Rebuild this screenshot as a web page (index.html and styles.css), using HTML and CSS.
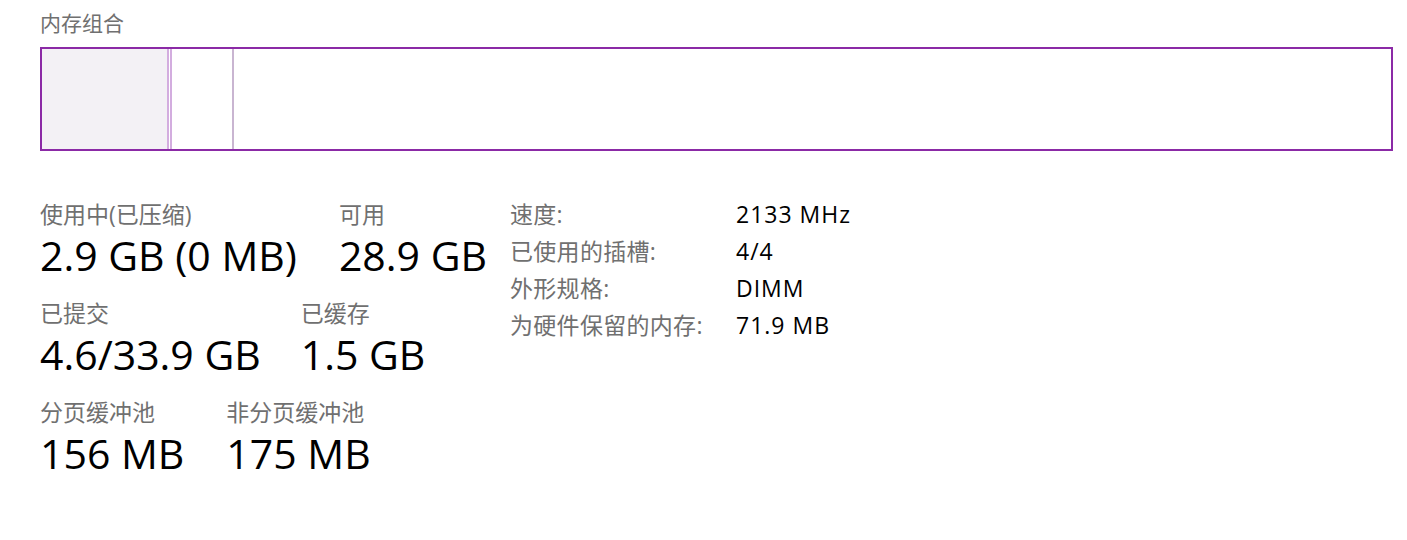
FILE: index.html
```html
<!DOCTYPE html>
<html lang="zh-CN">
<head>
    <meta charset="UTF-8">
    <title>内存</title>
    <link rel="stylesheet" href="styles.css">
</head>
<body>
<div class="memory">
    <div class="title">内存组合</div>
    <div class="composition">
        <div class="slot slot-used"></div>
        <div class="slot slot-modified"></div>
        <div class="slot slot-standby"></div>
        <div class="slot slot-free"></div>
    </div>

    <div class="details">
        <div class="stats">
            <div class="stat-row">
                <div class="stat">
                    <div class="label">使用中(已压缩)</div>
                    <div class="value">2.9 GB (0 MB)</div>
                </div>
                <div class="stat">
                    <div class="label">可用</div>
                    <div class="value">28.9 GB</div>
                </div>
            </div>
            <div class="stat-row">
                <div class="stat">
                    <div class="label">已提交</div>
                    <div class="value">4.6/33.9 GB</div>
                </div>
                <div class="stat">
                    <div class="label">已缓存</div>
                    <div class="value">1.5 GB</div>
                </div>
            </div>
            <div class="stat-row">
                <div class="stat">
                    <div class="label">分页缓冲池</div>
                    <div class="value">156 MB</div>
                </div>
                <div class="stat">
                    <div class="label">非分页缓冲池</div>
                    <div class="value">175 MB</div>
                </div>
            </div>
        </div>

        <dl class="info">
            <dt>速度:</dt>
            <dd>2133 MHz</dd>
            <dt>已使用的插槽:</dt>
            <dd>4/4</dd>
            <dt>外形规格:</dt>
            <dd>DIMM</dd>
            <dt>为硬件保留的内存:</dt>
            <dd>71.9 MB</dd>
        </dl>
    </div>
</div>
</body>
</html>
```

FILE: styles.css
```css
* {
    margin: 0;
    padding: 0;
    box-sizing: border-box;
}
body {
    background: #fff;
    font-family: "Open Sans", "Noto Sans CJK SC", sans-serif;
    color: #000;
}
.memory {
    padding: 11px 14px 0 40px;
}
.title {
    font-size: 21px;
    line-height: 24px;
    color: #707070;
}
.composition {
    margin-top: 12px;
    height: 104px;
    border: 2px solid #8b2aa6;
    display: flex;
}
.slot {
    height: 100%;
}
.slot-used {
    width: 127px;
    background: #f3f1f5;
    border-right: 2px solid #d3addf;
}
.slot-modified {
    width: 3px;
    border-right: 2px solid #d3addf;
}
.slot-standby {
    width: 62px;
    border-right: 2px solid #c9b5d1;
}
.slot-free {
    flex: 1;
}

.details {
    display: flex;
    margin-top: 48px;
}
.stats {
    width: 470px;
}
.stat-row {
    display: flex;
    gap: 42px;
    margin-bottom: 17px;
}
.stat-row:nth-child(2) {
    gap: 40px;
}
.label {
    font-size: 23px;
    line-height: 30px;
    color: #707070;
}
.value {
    font-size: 41px;
    line-height: 52px;
    color: #000;
}

.info {
    display: grid;
    grid-template-columns: 226px auto;
    grid-auto-rows: 37px;
    font-size: 23px;
    line-height: 30px;
}
.info dt {
    color: #707070;
    letter-spacing: 0.3px;
}
.info dd {
    color: #000;
    letter-spacing: 1px;
}
```
